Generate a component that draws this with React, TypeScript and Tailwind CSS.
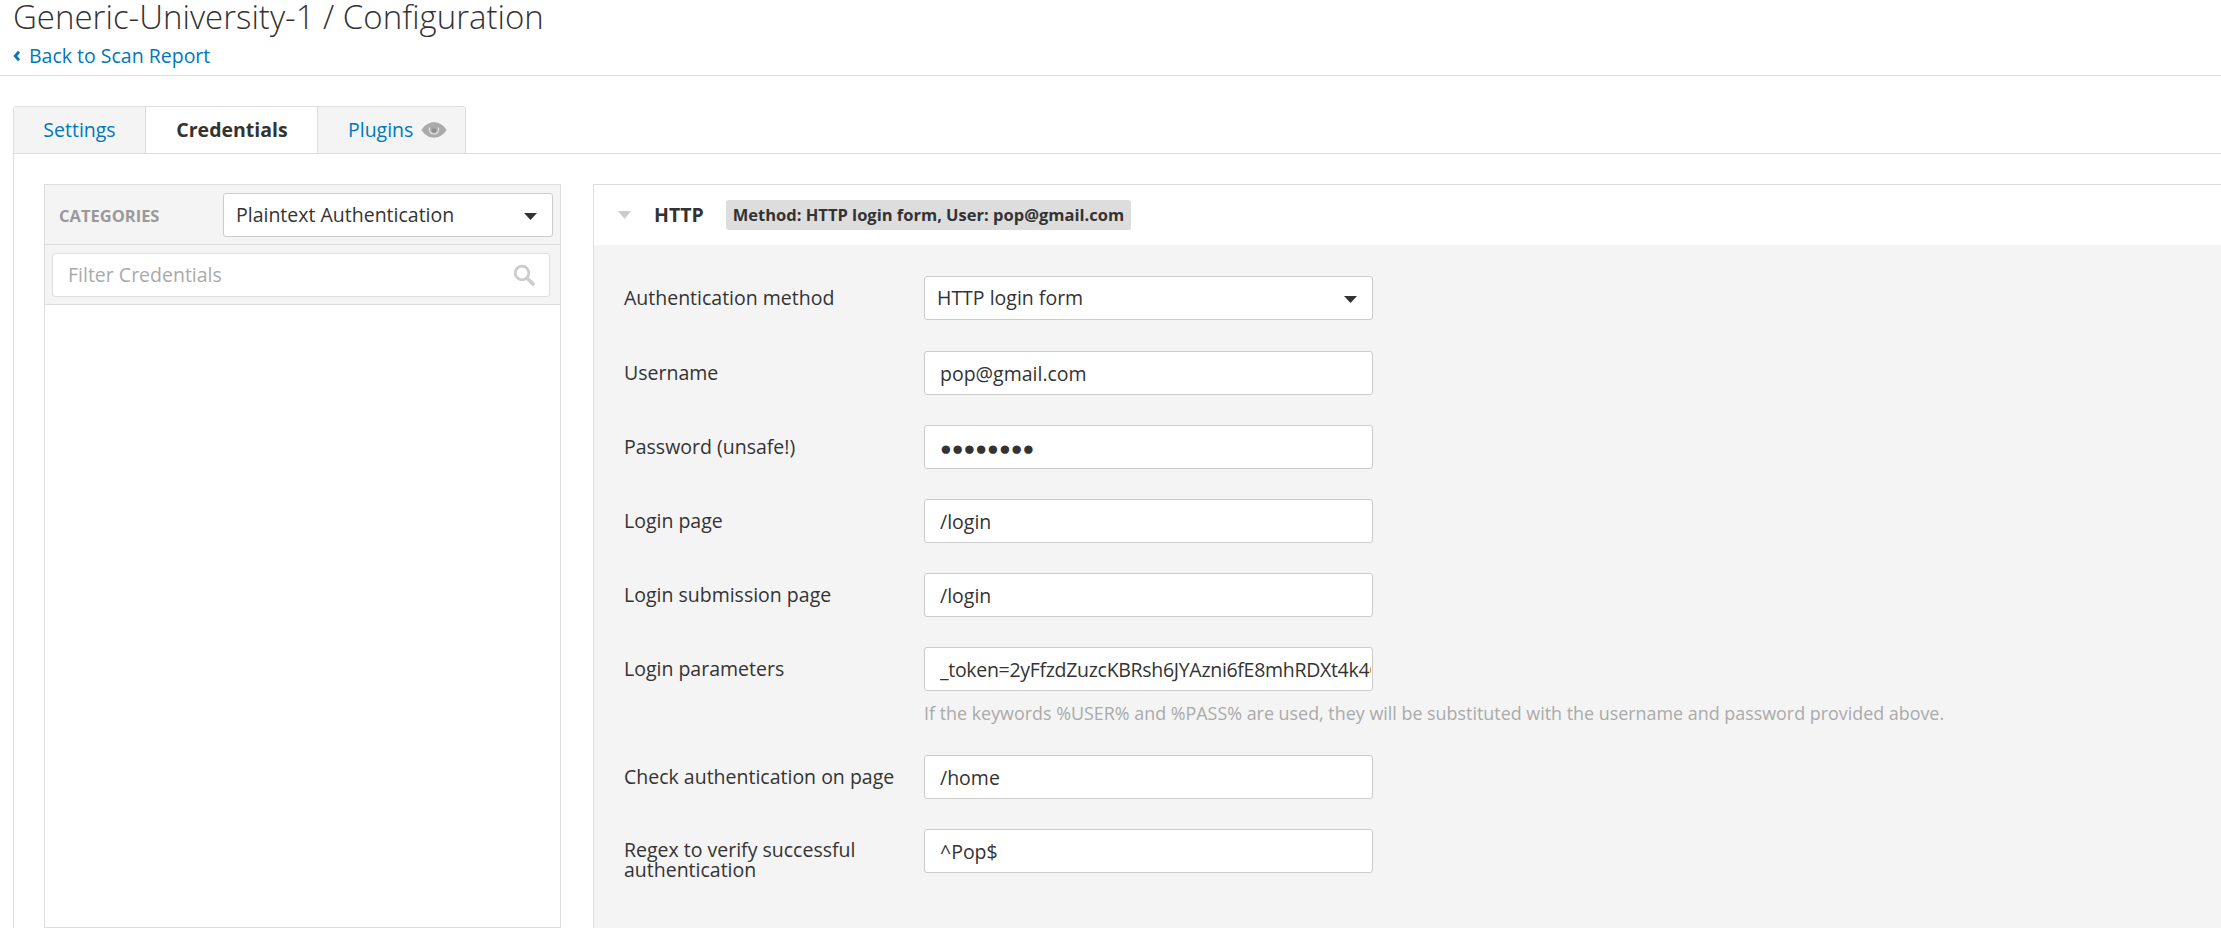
import React from "react";

const font = "font-['Open_Sans',sans-serif]";

function Caret() {
  return (
    <svg width="13" height="7" viewBox="0 0 13 7" className="mt-[3px] shrink-0">
      <path d="M0 0H13L6.5 7Z" fill="#333333" />
    </svg>
  );
}

function SearchIcon() {
  return (
    <svg width="22" height="22" viewBox="0 0 22 22" fill="none">
      <circle cx="9" cy="9" r="6.8" stroke="#cccccc" strokeWidth="2.8" />
      <path d="M14 14L20 20" stroke="#cccccc" strokeWidth="3.6" strokeLinecap="round" />
    </svg>
  );
}

function EyeIcon() {
  return (
    <svg width="26" height="16" viewBox="0 0 26 16" fill="none">
      <path d="M0.3 8C4 2.8 8.2 0.3 13 0.3S22 2.8 25.7 8C22 13.2 17.8 15.7 13 15.7S4 13.2 0.3 8Z" fill="#aaaaaa" />
      <path d="M8.6 5.5C7.6 9 9.6 12 13 12S18.4 9 17.4 5.5" stroke="#e4e4e4" strokeWidth="1.2" />
      <circle cx="13" cy="8.4" r="2.2" fill="#8f8f8f" />
    </svg>
  );
}

function Field({ label, value, inputClass = "px-[15px]" }: { label: string; value: string; inputClass?: string }) {
  return (
    <div className="flex items-center">
      <label className="w-[300px] shrink-0 text-[19.5px] leading-[22px] text-[#333333]">{label}</label>
      <input
        readOnly
        type="text"
        value={value}
        className={`${font} ${inputClass} h-[44px] w-[449px] rounded-[3px] border border-[#cccccc] bg-white text-[19.5px] text-[#333333] outline-none`}
      />
    </div>
  );
}

export default function App() {
  return (
    <div className={`${font} h-[928px] w-[2221px] overflow-hidden bg-white text-[#333333]`}>
      <header className="flow-root h-[76px] border-b border-[#dddddd] pl-[13px]">
        <h1 className="text-[33px] font-light leading-[34px] text-[#333333]">
          Generic-University-1 / Configuration
        </h1>
        <a className="mt-[10px] flex items-center gap-[8px] text-[19.5px] leading-[24px] text-[#0077bb]">
          <svg width="8" height="12" viewBox="0 0 8 12" fill="none">
            <path d="M6 1.8L2.3 6L6 10.2" stroke="#0077bb" strokeWidth="2.8" />
          </svg>
          Back to Scan Report
        </a>
      </header>

      <main className="pl-[13px] pt-[30px]">
        <nav className="flex h-[47px] w-[453px] overflow-hidden rounded-t-[4px] border border-b-0 border-[#dddddd] text-[19.5px]">
          <a className="flex w-[132px] items-center justify-center border-r border-[#dddddd] bg-[#f4f4f4] text-[#0077bb]">
            Settings
          </a>
          <a className="flex w-[172px] items-center justify-center border-r border-[#dddddd] bg-white pl-[1px] font-bold text-[#333333]">
            Credentials
          </a>
          <a className="flex flex-1 items-center gap-[8px] bg-[#f4f4f4] pl-[30px] text-[#0077bb]">
            Plugins
            <EyeIcon />
          </a>
        </nav>

        <section className="flex h-[775px] gap-[32px] border-l border-t border-[#dddddd] pl-[30px] pt-[30px]">
          <aside className="h-full w-[517px] shrink-0 border border-[#dddddd] bg-white">
            <div className="flex h-[60px] items-center justify-between border-b border-[#dddddd] bg-[#f4f4f4] pl-[14px] pr-[7px]">
              <span className="mt-[4px] text-[16.5px] font-bold text-[#999999]">CATEGORIES</span>
              <div className="flex h-[44px] w-[330px] items-center justify-between rounded-[3px] border border-[#cccccc] bg-white pl-[12px] pr-[15px] text-[19.5px] text-[#333333]">
                Plaintext Authentication
                <Caret />
              </div>
            </div>
            <div className="flex h-[60px] items-center border-b border-[#dddddd] bg-[#f4f4f4] pl-[7px] pr-[10px]">
              <div className="flex h-[44px] w-full items-center justify-between rounded-[3px] border border-[#dddddd] bg-white pl-[15px] pr-[14px] text-[19.5px] text-[#aaaaaa]">
                Filter Credentials
                <SearchIcon />
              </div>
            </div>
          </aside>

          <div className="h-full flex-1 border-l border-t border-[#dddddd]">
            <div className="flex h-[60px] items-center bg-white pl-[24px]">
              <svg width="13" height="8" viewBox="0 0 13 8">
                <path d="M0 0H13L6.5 8Z" fill="#cccccc" />
              </svg>
              <span className="ml-[23px] text-[19.5px] font-bold text-[#333333]">HTTP</span>
              <span className="ml-[22px] flex h-[30px] items-center rounded-[3px] bg-[#dddddd] px-[7px] text-[16.5px] font-bold text-[#333333]">
                Method: HTTP login form, User: pop@gmail.com
              </span>
            </div>
            <div className="h-full bg-[#f4f4f4] pl-[30px] pt-[31px]">
              <div className="flex items-center">
                <label className="w-[300px] shrink-0 text-[19.5px] text-[#333333]">Authentication method</label>
                <div className="flex h-[44px] w-[449px] items-center justify-between rounded-[3px] border border-[#cccccc] bg-white pl-[12px] pr-[15px] text-[19.5px] text-[#333333]">
                  HTTP login form
                  <Caret />
                </div>
              </div>
              <div className="mt-[31px] flex flex-col gap-[30px]">
                <Field label="Username" value="pop@gmail.com" />
                <Field label="Password (unsafe!)" value="●●●●●●●●" />
                <Field label="Login page" value="/login" />
                <Field label="Login submission page" value="/login" />
                <div>
                  <Field
                    label="Login parameters"
                    value="_token=2yFfzdZuzcKBRsh6JYAzni6fE8mhRDXt4k4Qe7vLm"
                    inputClass="pl-[15px] pr-[1px] tracking-[-0.3px]"
                  />
                  <p className="ml-[300px] mt-[10px] text-[17.9px] leading-[24px] text-[#aaaaaa]">
                    If the keywords %USER% and %PASS% are used, they will be substituted with the username and password provided above.
                  </p>
                </div>
                <Field label="Check authentication on page" value="/home" />
                <div className="flex items-start">
                  <label className="mt-[11px] w-[260px] shrink-0 text-[19.5px] leading-[20px] text-[#333333]">
                    Regex to verify successful authentication
                  </label>
                  <input
                    readOnly
                    value="^Pop$"
                    className={`${font} ml-[40px] h-[44px] w-[449px] rounded-[3px] border border-[#cccccc] bg-white px-[15px] text-[19.5px] text-[#333333] outline-none`}
                  />
                </div>
              </div>
            </div>
          </div>
        </section>
      </main>
    </div>
  );
}
